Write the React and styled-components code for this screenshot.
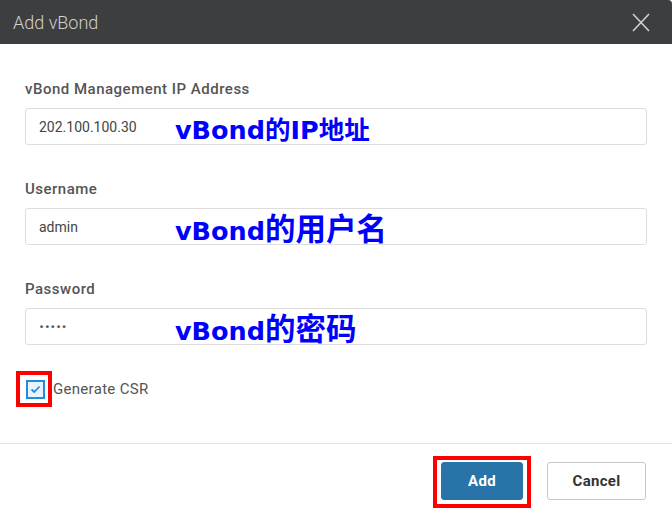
import React from "react";
import styled, { createGlobalStyle } from "styled-components";

const Global = createGlobalStyle`
  html, body { margin: 0; padding: 0; background: #fff; }
  body { font-family: Roboto, "Liberation Sans", Arial, sans-serif; }
  * { box-sizing: border-box; }
`;

const Dialog = styled.div`
  width: 672px;
  height: 518px;
  background: #fff;
  display: flex;
  flex-direction: column;
  overflow: hidden;
`;

const Header = styled.div`
  height: 44px;
  flex-shrink: 0;
  background: #3d3e40;
  display: flex;
  align-items: center;
  justify-content: space-between;
  padding: 0 22px 0 13px;
  border-top-right-radius: 4px;
`;

const Title = styled.div`
  color: #d0d0d0;
  font-size: 18px;
  font-weight: 300;
`;

const Body = styled.div`
  padding: 36px 25px 0 25px;
  display: flex;
  flex-direction: column;
  flex: 1;
`;

const Field = styled.div`
  display: flex;
  flex-direction: column;
  margin-bottom: 35px;
`;

const Label = styled.div`
  font-size: 15px;
  line-height: 18px;
  font-weight: 500;
  letter-spacing: 0.5px;
  color: #555;
  margin-bottom: 10px;
`;

const InputWrap = styled.div`
  position: relative;
  height: 37px;
  border: 1px solid #dedede;
  border-radius: 3px;
  display: flex;
  align-items: center;
  padding-left: 13px;
  font-size: 14px;
  color: #444;
`;

const Dots = styled.span`
  letter-spacing: 0.5px;
  font-size: 16px;
  font-weight: 900;
  color: #555;
`;

const Note = styled.div`
  position: absolute;
  left: 149px;
  top: 50%;
  transform: translateY(calc(-50% + ${(p) => p.$shift}px));
  display: flex;
  align-items: baseline;
  color: #0000ff;
  font-family: "DejaVu Sans", "Noto Sans CJK SC", sans-serif;
  font-weight: 700;
  font-size: 25.5px;
  line-height: 1;
  white-space: nowrap;
`;

const Cjk = styled.span`
  font-family: "Noto Sans CJK SC", sans-serif;
  font-size: ${(p) => p.$size}px;
  line-height: 1;
`;

const CheckRow = styled.div`
  position: relative;
  display: flex;
  align-items: center;
  margin-top: -1px;
  margin-left: 1px;
  gap: 9px;
  height: 20px;
`;

const Box = styled.div`
  width: 19px;
  height: 19px;
  border: 2px solid #1d8fe0;
  background: #e9f3fb;
  display: flex;
  align-items: center;
  justify-content: center;
`;

const CheckLabel = styled.span`
  font-size: 15px;
  letter-spacing: 0.3px;
  color: #555;
  margin-left: -1px;
`;

const Highlight = styled.div`
  position: absolute;
  border: 4px solid #ff0000;
  pointer-events: none;
`;

const Footer = styled.div`
  border-top: 1px solid #e2e2e2;
  height: 75px;
  flex-shrink: 0;
  display: flex;
  justify-content: flex-end;
  align-items: flex-start;
  padding: 18px 26px 0 0;
  gap: 24px;
`;

const BtnWrap = styled.div`
  position: relative;
`;

const Button = styled.button`
  height: 38px;
  width: ${(p) => p.$w}px;
  border-radius: 3px;
  font-family: Roboto, "Liberation Sans", Arial, sans-serif;
  font-size: 15px;
  font-weight: 700;
  letter-spacing: 0.3px;
  border: 1px solid ${(p) => (p.$primary ? "#2873a8" : "#c8c8c8")};
  background: ${(p) => (p.$primary ? "#2873a8" : "#fff")};
  color: ${(p) => (p.$primary ? "#fff" : "#333")};
`;

const fields = [
  { label: "vBond Management IP Address", value: "202.100.100.30", note: "vBond的IP地址", shift: 4 },
  { label: "Username", value: "admin", note: "vBond", cjk: "的用户名", shift: 1 },
  { label: "Password", value: "•••••", note: "vBond", cjk: "的密码", password: true, shift: 1 },
];

export default function App() {
  return (
    <>
      <Global />
      <Dialog>
        <Header>
          <Title>Add vBond</Title>
          <svg width="18" height="19" viewBox="0 0 18 19">
            <path d="M1 1 L17 18 M17 1 L1 18" stroke="#d0d0d0" strokeWidth="1.6" />
          </svg>
        </Header>
        <Body>
          {fields.map((f) => (
            <Field key={f.label}>
              <Label>{f.label}</Label>
              <InputWrap>
                {f.password ? <Dots>·····</Dots> : f.value}
                <Note $shift={f.shift}>
                  {f.note}
                  {f.cjk && <Cjk $size={30.5}>{f.cjk}</Cjk>}
                </Note>
              </InputWrap>
            </Field>
          ))}
          <CheckRow>
            <Box>
              <svg width="11" height="9" viewBox="0 0 11 9">
                <path d="M1.5 4.5 L4.2 7 L9.5 1.5" stroke="#1d8fe0" strokeWidth="1.8" fill="none" />
              </svg>
            </Box>
            <CheckLabel>Generate CSR</CheckLabel>
            <Highlight style={{ left: -10, top: -8, width: 36, height: 36 }} />
          </CheckRow>
        </Body>
        <Footer>
          <BtnWrap>
            <Button $primary $w={82}>Add</Button>
            <Highlight style={{ left: -8, top: -6, width: 98, height: 52 }} />
          </BtnWrap>
          <Button $w={99}>Cancel</Button>
        </Footer>
      </Dialog>
    </>
  );
}
